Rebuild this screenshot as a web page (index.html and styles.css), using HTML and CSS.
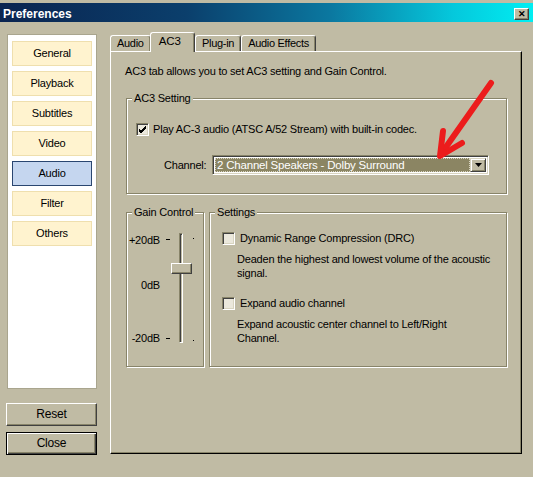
FILE: index.html
```html
<!DOCTYPE html>
<html>
<head>
<meta charset="utf-8">
<link rel="stylesheet" href="styles.css">
</head>
<body>
<div class="titlebar">
  <span class="title">Preferences</span>
  <span class="xbtn">&#x2715;</span>
</div>
<div class="main">
  <div class="side">
    <div class="navpanel">
      <div class="navbtn">General</div>
      <div class="navbtn">Playback</div>
      <div class="navbtn">Subtitles</div>
      <div class="navbtn">Video</div>
      <div class="navbtn active">Audio</div>
      <div class="navbtn">Filter</div>
      <div class="navbtn">Others</div>
    </div>
    <div class="btn reset">Reset</div>
    <div class="btn default">Close</div>
  </div>
  <div class="tabs">
    <div class="tabstrip">
      <div class="tab">Audio</div>
      <div class="tab active">AC3</div>
      <div class="tab">Plug-in</div>
      <div class="tab">Audio Effects</div>
    </div>
    <div class="tabpanel">
      <p class="intro">AC3 tab allows you to set AC3 setting and Gain Control.</p>
      <div class="group ac3">
        <div class="legend">AC3 Setting</div>
        <div class="checkrow first">
          <span class="cb"><svg width="9" height="9" viewBox="0 0 9 9"><path d="M1 4 L3 6 L8 1 M1 5 L3 7 L8 2 M1 6 L3 8 L8 3" fill="none" stroke="#000" stroke-width="1"/></svg></span>
          <span>Play AC-3 audio (ATSC A/52 Stream) with built-in codec.</span>
        </div>
        <div class="channelrow">
          <span>Channel:</span>
          <div class="select">
            <span class="selval"><span class="seltext">2 Channel Speakers - Dolby Surround</span></span>
            <span class="dd"><svg width="7" height="4" viewBox="0 0 7 4"><path d="M0 0 H7 L3.5 4 Z" fill="#000"/></svg></span>
          </div>
        </div>
      </div>
      <div class="lower">
        <div class="group gain">
          <div class="legend">Gain Control</div>
          <div class="gainbody">
            <div class="scale">
              <span class="lbl top">+20dB</span>
              <span class="lbl mid">0dB</span>
              <span class="lbl bot">-20dB</span>
            </div>
            <div class="ticks">
              <span class="tick t1"></span>
              <span class="tick t2"></span>
            </div>
            <div class="slider">
              <div class="track"></div>
              <div class="thumb"></div>
            </div>
            <div class="dots">
              <span class="dot d1"></span>
              <span class="dot d2"></span>
            </div>
          </div>
        </div>
        <div class="group settings">
          <div class="legend">Settings</div>
          <div class="setbody">
            <div class="checkrow r1"><span class="cb"></span><span>Dynamic Range Compression (DRC)</span></div>
            <div class="desc">Deaden the highest and lowest volume of the acoustic<br>signal.</div>
            <div class="checkrow r2"><span class="cb"></span><span>Expand audio channel</span></div>
            <div class="desc">Expand acoustic center channel to Left/Right<br>Channel.</div>
          </div>
        </div>
      </div>
    </div>
  </div>
</div>
<svg class="arrow" width="533" height="477" viewBox="0 0 533 477">
  <g fill="none" stroke="#ec1c1c" stroke-width="6" stroke-linecap="round" stroke-linejoin="round">
    <path d="M491 83 L441 154"/>
    <path d="M443 131 L440 156 L462 143"/>
  </g>
</svg>
</body>
</html>
```
FILE: styles.css
```css
html, body {
  margin: 0;
  padding: 0;
}
body {
  width: 533px;
  height: 477px;
  overflow: hidden;
  background: #c0bba4;
  font-family: "Liberation Sans", Arial, sans-serif;
  font-size: 11px;
  letter-spacing: -0.2px;
  color: #000;
  position: relative;
}
.titlebar {
  margin-top: 3px;
  height: 19px;
  display: flex;
  align-items: center;
  justify-content: space-between;
  padding: 0 4px 0 3px;
  background: linear-gradient(90deg, #0a2450 0%, #0b3f6c 35%, #0b78a0 62%, #05c8dc 85%, #00eef2 100%);
}
.title {
  color: #fff;
  font-weight: bold;
  font-size: 12px;
  letter-spacing: 0;
  padding-top: 2px;
}
.xbtn {
  width: 15px;
  height: 12px;
  box-sizing: border-box;
  margin-top: 2px;
  background: #c0bba4;
  border: 1px solid;
  border-color: #fff #404040 #404040 #fff;
  box-shadow: inset -1px -1px 0 #888469;
  font-size: 9px;
  font-weight: bold;
  line-height: 10px;
  text-align: center;
  color: #000;
}
.main {
  display: flex;
  align-items: flex-start;
  padding-top: 10px;
}
.side {
  margin-left: 6px;
  margin-top: 2px;
  width: 91px;
  display: flex;
  flex-direction: column;
}
.navpanel {
  margin-left: 1px;
  width: 90px;
  height: 355px;
  box-sizing: border-box;
  background: #fff;
  border: 1px solid #a9a58e;
  padding: 6px 0 0 4px;
}
.navbtn {
  width: 80px;
  height: 25px;
  box-sizing: border-box;
  margin-bottom: 5px;
  background: #fff3cf;
  border: 1px solid #efdfae;
  text-align: center;
  line-height: 23px;
}
.navbtn.active {
  background: #c5d6ef;
  border-color: #2a4670;
}
.btn {
  height: 23px;
  box-sizing: border-box;
  border: 1px solid;
  border-color: #fff #404040 #404040 #fff;
  box-shadow: inset -1px -1px 0 #888469;
  text-align: center;
  line-height: 20px;
  font-size: 12px;
}
.btn.reset {
  margin-top: 14px;
}
.btn.default {
  margin-top: 6px;
  border: 1px solid #000;
  box-shadow: inset 1px 1px 0 #fff, inset -1px -1px 0 #404040, inset -2px -2px 0 #888469;
}
.tabs {
  margin-left: 13px;
  width: 412px;
  display: flex;
  flex-direction: column;
}
.tabstrip {
  height: 20px;
  display: flex;
  align-items: flex-end;
  margin-bottom: -1px;
  position: relative;
  z-index: 1;
}
.tab {
  height: 16px;
  box-sizing: border-box;
  margin-bottom: 1px;
  padding: 0 6px;
  border-top: 1px solid #fff;
  border-left: 1px solid #fff;
  border-right: 1px solid #404040;
  box-shadow: inset -1px 0 0 #888469;
  border-radius: 3px 3px 0 0;
  line-height: 15px;
  font-size: 11px;
  letter-spacing: -0.3px;
  background: #c0bba4;
}
.tab.active {
  height: 20px;
  margin: 0 0 0 -1px;
  padding: 0 13px 0 8px;
  line-height: 17px;
  font-size: 11.5px;
  letter-spacing: 0;
  position: relative;
}
.tabpanel {
  height: 403px;
  box-sizing: border-box;
  border: 1px solid;
  border-color: #fff #000 #000 #fff;
  box-shadow: inset -1px -1px 0 #888469;
  padding: 12px 14px 0 14px;
  display: flex;
  flex-direction: column;
}
.intro {
  margin: 0;
  line-height: 14px;
}
.group {
  box-sizing: border-box;
  border: 1px solid #888469;
  box-shadow: inset 1px 1px 0 #fff, 1px 1px 0 #fff;
  display: flex;
  flex-direction: column;
}
.legend {
  align-self: flex-start;
  margin: -7px 0 0 5px;
  padding: 0 2px;
  line-height: 13px;
  background: #c0bba4;
}
.ac3 {
  margin: 20px 0 0 1px;
  padding-bottom: 18px;
}
.checkrow {
  display: flex;
  align-items: center;
  gap: 4px;
  height: 13px;
  line-height: 13px;
}
.checkrow.first {
  margin: 18px 0 0 9px;
}
.cb {
  width: 13px;
  height: 13px;
  box-sizing: border-box;
  flex: none;
  background: #ebe8dc;
  border: 1px solid;
  border-color: #888469 #fff #fff #888469;
  box-shadow: inset 1px 1px 0 #404040, inset -1px -1px 0 #d8d4c0;
  display: flex;
  align-items: center;
  justify-content: center;
}
.cb svg {
  display: block;
}
.channelrow {
  margin-top: 19px;
  padding-left: 37px;
  display: flex;
  align-items: center;
  height: 20px;
}
.select {
  margin-left: auto;
  margin-right: 17px;
  width: 277px;
  height: 20px;
  box-sizing: border-box;
  border: 1px solid;
  border-color: #888469 #fff #fff #888469;
  box-shadow: inset 1px 1px 0 #404040, inset -1px -1px 0 #d8d4c0;
  padding: 2px;
  display: flex;
  background: #fff;
}
.selval {
  flex: 1;
  background: #8b8563;
  color: #fff;
  display: flex;
  align-items: center;
  outline: 1px dotted #d8d4c0;
  outline-offset: -1px;
  padding-left: 2px;
  font-size: 11.5px;
  letter-spacing: -0.2px;
}
.dd {
  width: 16px;
  flex: none;
  box-sizing: border-box;
  background: #c0bba4;
  border: 1px solid;
  border-color: #d8d4c0 #404040 #404040 #d8d4c0;
  box-shadow: inset 1px 1px 0 #fff, inset -1px -1px 0 #888469;
  display: flex;
  align-items: center;
  justify-content: center;
}
.dd svg {
  display: block;
}
.lower {
  margin: 18px 0 0 1px;
  display: flex;
  gap: 5px;
  height: 155px;
}
.gain {
  width: 78px;
  flex: none;
}
.settings {
  flex: 1;
}
.gainbody {
  display: flex;
}
.scale {
  width: 33px;
  display: flex;
  flex-direction: column;
  align-items: flex-end;
  padding-top: 15px;
}
.lbl {
  line-height: 13px;
}
.lbl.mid {
  margin-top: 32px;
}
.lbl.bot {
  margin-top: 40px;
}
.ticks {
  width: 11px;
  display: flex;
  flex-direction: column;
  padding-top: 20px;
}
.tick {
  display: block;
  width: 4px;
  height: 1px;
  margin-left: 6px;
  background: #000;
}
.tick.t2 {
  margin-top: 98px;
}
.slider {
  width: 21px;
  height: 110px;
  margin-top: 14px;
  position: relative;
}
.track {
  margin-left: 8px;
  width: 4px;
  height: 110px;
  box-sizing: border-box;
  border: 1px solid;
  border-color: #888469 #fff #fff #888469;
  box-shadow: inset 1px 1px 0 #404040;
}
.thumb {
  position: absolute;
  left: 0;
  top: 30px;
  width: 21px;
  height: 11px;
  box-sizing: border-box;
  background: #c0bba4;
  border: 1px solid;
  border-color: #fff #404040 #404040 #fff;
  box-shadow: inset -1px -1px 0 #888469;
}
.dots {
  display: flex;
  flex-direction: column;
  padding-top: 19px;
}
.dot {
  display: block;
  width: 1px;
  height: 1px;
  margin-left: 1px;
  background: #000;
}
.dot.d2 {
  margin-top: 101px;
}
.setbody {
  padding-left: 12px;
  display: flex;
  flex-direction: column;
}
.setbody .checkrow {
  gap: 5px;
}
.checkrow.r1 {
  margin-top: 13px;
}
.checkrow.r2 {
  margin-top: 17px;
}
.desc {
  margin: 7px 0 0 15px;
  line-height: 14px;
}
.arrow {
  position: absolute;
  left: 0;
  top: 0;
  pointer-events: none;
}
```
